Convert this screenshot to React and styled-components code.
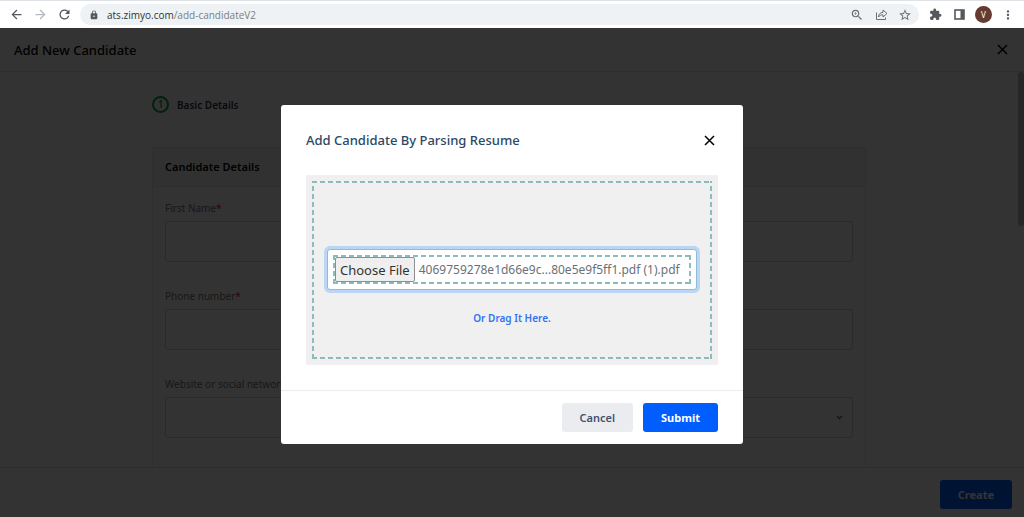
import { useRef, useState } from "react";
import styled, { createGlobalStyle, css } from "styled-components";
import {
  MdArrowBack,
  MdArrowForward,
  MdRefresh,
  MdLock,
  MdZoomIn,
  MdStarBorder,
  MdExtension,
  MdMoreVert,
} from "react-icons/md";

export default function App() {
  return (
    <>
      <GlobalStyle />
      <Shell>
        <BrowserBar />
        <Page>
          <AddCandidate />
          <ResumeDialog />
        </Page>
      </Shell>
    </>
  );
}

function BrowserBar() {
  return (
    <Toolbar>
      <ToolButton aria-label="Back">
        <MdArrowBack size={15} />
      </ToolButton>
      <ToolButton aria-label="Forward" $muted>
        <MdArrowForward size={15} />
      </ToolButton>
      <ToolButton aria-label="Reload">
        <MdRefresh size={15} />
      </ToolButton>
      <AddressBar>
        <MdLock size={10} />
        <Url>
          <Host>ats.zimyo.com</Host>/add-candidateV2
        </Url>
        <ToolButton aria-label="Zoom" $thin>
          <MdZoomIn size={14} />
        </ToolButton>
        <ToolButton aria-label="Share" $thin>
          <ShareIcon />
        </ToolButton>
        <ToolButton aria-label="Bookmark" $thin>
          <MdStarBorder size={14} />
        </ToolButton>
      </AddressBar>
      <ToolButton aria-label="Extensions">
        <MdExtension size={13} />
      </ToolButton>
      <ToolButton aria-label="Side panel">
        <PanelIcon />
      </ToolButton>
      <Avatar aria-label="Profile">V</Avatar>
      <ToolButton aria-label="Menu">
        <MdMoreVert size={14} />
      </ToolButton>
    </Toolbar>
  );
}

function AddCandidate() {
  return (
    <>
      <PageHeader>
        <PageTitle>Add New Candidate</PageTitle>
        <CloseButton aria-label="Close page">
          <CrossIcon />
        </CloseButton>
      </PageHeader>
      <ScrollArea>
        <Content>
          <Step>
            <StepNumber>1</StepNumber>
            Basic Details
          </Step>
          <Card>
            <CardTitle>Candidate Details</CardTitle>
            <Field>
              <Label htmlFor="firstName">
                First Name<Required>*</Required>
              </Label>
              <Input id="firstName" type="text" />
            </Field>
            <Field>
              <Label htmlFor="phone">
                Phone number<Required>*</Required>
              </Label>
              <Input id="phone" type="tel" />
            </Field>
            <Field>
              <Label htmlFor="website">Website or social network</Label>
              <SelectBox>
                <Select id="website" defaultValue="">
                  <option value=""></option>
                </Select>
                <ChevronIcon />
              </SelectBox>
            </Field>
          </Card>
        </Content>
        <ScrollTrack>
          <ScrollThumb />
        </ScrollTrack>
      </ScrollArea>
      <PageFooter>
        <CreateButton>Create</CreateButton>
      </PageFooter>
    </>
  );
}

function ResumeDialog() {
  const picker = useRef(null);
  const [fileName, setFileName] = useState(
    "4069759278e1d66e9c...80e5e9f5ff1.pdf (1).pdf"
  );

  const handleChange = (e) => {
    if (e.target.files[0]) setFileName(e.target.files[0].name);
  };

  return (
    <Overlay>
      <Dialog role="dialog" aria-labelledby="resumeTitle">
        <DialogHeader>
          <DialogTitle id="resumeTitle">
            Add Candidate By Parsing Resume
          </DialogTitle>
          <CloseButton aria-label="Close dialog">
            <CrossIcon />
          </CloseButton>
        </DialogHeader>
        <DropZone>
          <DropArea>
            <FileBox>
              <FileRow>
                <HiddenInput
                  ref={picker}
                  type="file"
                  aria-label="Resume"
                  onChange={handleChange}
                />
                <ChooseButton
                  type="button"
                  onClick={() => picker.current.click()}
                >
                  Choose File
                </ChooseButton>
                <FileName>{fileName}</FileName>
              </FileRow>
            </FileBox>
            <DragHint>Or Drag It Here.</DragHint>
          </DropArea>
        </DropZone>
        <DialogFooter>
          <DialogButton>Cancel</DialogButton>
          <DialogButton $primary>Submit</DialogButton>
        </DialogFooter>
      </Dialog>
    </Overlay>
  );
}

function CrossIcon() {
  return (
    <svg width="11" height="11" viewBox="0 0 11 11" fill="none">
      <path
        d="M1 1L10 10M10 1L1 10"
        stroke="currentColor"
        strokeWidth="1.5"
      />
    </svg>
  );
}

function ChevronIcon() {
  return (
    <svg width="7" height="5" viewBox="0 0 7 5" fill="none">
      <path d="M1 1L3.5 3.5L6 1" stroke="currentColor" strokeWidth="1.4" />
    </svg>
  );
}

function ShareIcon() {
  return (
    <svg width="13" height="13" viewBox="0 0 13 13" fill="none">
      <path
        d="M1.5 4.5V11.5H10.5V9.5"
        stroke="currentColor"
        strokeWidth="1"
      />
      <path
        d="M3.5 9C3.8 6 5.2 4.5 8 4.4V2L12 5.5L8 9V6.8C6 6.8 4.6 7.4 3.5 9Z"
        stroke="currentColor"
        strokeWidth="1"
        strokeLinejoin="round"
      />
    </svg>
  );
}

function PanelIcon() {
  return (
    <svg width="11" height="11" viewBox="0 0 11 11" fill="none">
      <rect x="1" y="1" width="9" height="9" stroke="currentColor" strokeWidth="1.6" />
      <rect x="6.5" y="1" width="3.5" height="9" fill="currentColor" />
    </svg>
  );
}

const GlobalStyle = createGlobalStyle`
  * {
    box-sizing: border-box;
  }
  body {
    margin: 0;
    font-family: "Noto Sans", "Open Sans", sans-serif;
    font-size: 10px;
  }
  button, input, select {
    font-family: inherit;
    font-size: inherit;
  }
`;

/* dashes along the four sides of a box */
const dashedFrame = css`
  --dash: #8dbaba;
  background-image: repeating-linear-gradient(90deg, var(--dash) 0 5px, transparent 5px 8px),
    repeating-linear-gradient(90deg, var(--dash) 0 5px, transparent 5px 8px),
    repeating-linear-gradient(0deg, var(--dash) 0 5px, transparent 5px 8px),
    repeating-linear-gradient(0deg, var(--dash) 0 5px, transparent 5px 8px);
  background-size: 100% 2px, 100% 2px, 2px 100%, 2px 100%;
  background-position: top left, bottom left, top left, top right;
  background-repeat: no-repeat;
`;

const Shell = styled.div`
  display: flex;
  flex-direction: column;
  height: 100vh;
`;

const Toolbar = styled.div`
  display: flex;
  align-items: center;
  gap: 8px;
  padding: 3px 8px;
  border-top: 1px solid #dee1e6;
  background: #fff;
`;

const ToolButton = styled.button`
  display: flex;
  align-items: center;
  justify-content: center;
  width: 16px;
  height: 16px;
  padding: 0;
  border: 0;
  background: none;
  color: ${(p) => (p.$muted ? "#b4b7ba" : p.$thin ? "#6b6f73" : "#55595d")};
`;

const AddressBar = styled.div`
  display: flex;
  flex: 1;
  align-items: center;
  gap: 8px;
  height: 21px;
  padding: 0 6px 0 9px;
  border-radius: 11px;
  background: #eff2f4;
  color: #55595d;
`;

const Url = styled.span`
  flex: 1;
  color: #7a7e82;
  font-family: "Open Sans", sans-serif;
  line-height: 16px;
`;

const Host = styled.span`
  color: #303336;
`;

const Avatar = styled.button`
  width: 17px;
  height: 17px;
  padding: 0;
  border: 0;
  border-radius: 50%;
  background: #653a2f;
  color: #fff;
  font-size: 8px;
  line-height: 17px;
`;

const Page = styled.div`
  position: relative;
  display: flex;
  flex: 1;
  flex-direction: column;
  min-height: 0;
  background: #fff;
`;

const PageHeader = styled.header`
  display: flex;
  align-items: center;
  justify-content: space-between;
  height: 44px;
  padding: 0 16px 0 14px;
  border-bottom: 1px solid #e4e4e4;
`;

const PageTitle = styled.h1`
  margin: 0;
  font-size: 13px;
  font-weight: 500;
`;

const CloseButton = styled.button`
  display: flex;
  padding: 0;
  border: 0;
  background: none;
  color: #000;
`;

const ScrollArea = styled.main`
  display: flex;
  flex: 1;
  min-height: 0;
  overflow: hidden;
`;

const Content = styled.div`
  flex: 1;
  max-width: 714px;
  margin: 0 auto;
  padding-top: 24px;
`;

const Step = styled.div`
  display: flex;
  align-items: center;
  gap: 8px;
  margin-bottom: 34px;
  color: #2b3240;
  font-weight: 600;
`;

const StepNumber = styled.span`
  width: 17px;
  height: 17px;
  border: 2px solid #00a050;
  border-radius: 50%;
  color: #00a050;
  line-height: 13px;
  text-align: center;
`;

const Card = styled.section`
  padding-bottom: 20px;
  border: 1px solid #e8e8e8;
`;

const CardTitle = styled.h2`
  margin: 0 0 12px;
  padding: 0 12px;
  border-bottom: 1px solid #e8e8e8;
  background: #f6f6f6;
  font-size: 11px;
  font-weight: 600;
  line-height: 38px;
`;

const Field = styled.div`
  display: flex;
  flex-direction: column;
  gap: 4px;
  margin-bottom: 25px;
  padding: 0 12px;
`;

const Label = styled.label`
  color: #777;
  line-height: 18px;
`;

const Required = styled.span`
  color: #e02020;
`;

const inputBox = css`
  width: 100%;
  height: 41px;
  padding: 0 12px;
  border: 1px solid #d0d0d0;
  border-radius: 3px;
  background: #fff;
`;

const Input = styled.input`
  ${inputBox}
`;

const SelectBox = styled.div`
  display: grid;
  align-items: center;
  color: #666;

  > * {
    grid-area: 1 / 1;
  }

  svg {
    justify-self: end;
    margin-right: 10px;
    pointer-events: none;
  }
`;

const Select = styled.select`
  ${inputBox}
  appearance: none;
`;

const ScrollTrack = styled.div`
  width: 6px;
`;

const ScrollThumb = styled.div`
  height: 39%;
  border-radius: 3px;
  background: #bcbcbc;
`;

const PageFooter = styled.footer`
  display: flex;
  justify-content: flex-end;
  padding: 12px 12px 8px;
  border-top: 1px solid #e4e4e4;
`;

const CreateButton = styled.button`
  padding: 0 18px;
  border: 0;
  border-radius: 3px;
  background: #0060ff;
  color: #fff;
  font-size: 11px;
  font-weight: 700;
  line-height: 29px;
`;

const Overlay = styled.div`
  position: absolute;
  inset: 0;
  display: flex;
  align-items: center;
  justify-content: center;
  padding-top: 4px;
  background: rgba(0, 0, 0, 0.8);
`;

const Dialog = styled.div`
  width: 100%;
  max-width: 462px;
  border-radius: 3px;
  background: #fff;
`;

const DialogHeader = styled.div`
  display: flex;
  align-items: center;
  justify-content: space-between;
  height: 70px;
  padding: 0 28px 0 25px;
`;

const DialogTitle = styled.h2`
  margin: 0;
  color: #2c4865;
  font-size: 13px;
  font-weight: 500;
`;

const DropZone = styled.div`
  margin: 0 25px 25px;
  padding: 6px;
  background: #f0f0f0;
`;

const DropArea = styled.div`
  ${dashedFrame}
  display: flex;
  flex-direction: column;
  align-items: center;
  gap: 19px;
  padding: 68px 12px 32px;
`;

const FileBox = styled.div`
  width: 100%;
  max-width: 370px;
  padding: 5px;
  border: 1px solid #8dbfd0;
  border-radius: 3px;
  background: #fff;
  box-shadow: 0 0 0 3px #b9d6f5;
`;

const FileRow = styled.div`
  ${dashedFrame}
  position: relative;
  display: flex;
  align-items: center;
  gap: 4px;
  padding: 2px;
`;

const HiddenInput = styled.input`
  position: absolute;
  width: 1px;
  height: 1px;
  opacity: 0;
`;

const ChooseButton = styled.button`
  height: 25px;
  padding: 0 4px;
  border: 1px solid #8f8f8f;
  border-radius: 2px;
  background: #efefef;
  color: #333;
  font-size: 13px;
  white-space: nowrap;
`;

const FileName = styled.span`
  flex: 1;
  color: #6c7076;
  font-size: 12px;
  white-space: nowrap;
`;

const DragHint = styled.p`
  margin: 0;
  color: #2f74f5;
  font-weight: 600;
  line-height: 18px;
`;

const DialogFooter = styled.div`
  display: flex;
  justify-content: flex-end;
  gap: 10px;
  padding: 12px 25px;
  border-top: 1px solid #ececec;
`;

const DialogButton = styled.button`
  padding: 0 18px;
  border: 0;
  border-radius: 3px;
  background: ${(p) => (p.$primary ? "#005eff" : "#ebecf0")};
  color: ${(p) => (p.$primary ? "#fff" : "#42536b")};
  font-size: 11px;
  font-weight: ${(p) => (p.$primary ? 700 : 600)};
  line-height: 29px;
`;
